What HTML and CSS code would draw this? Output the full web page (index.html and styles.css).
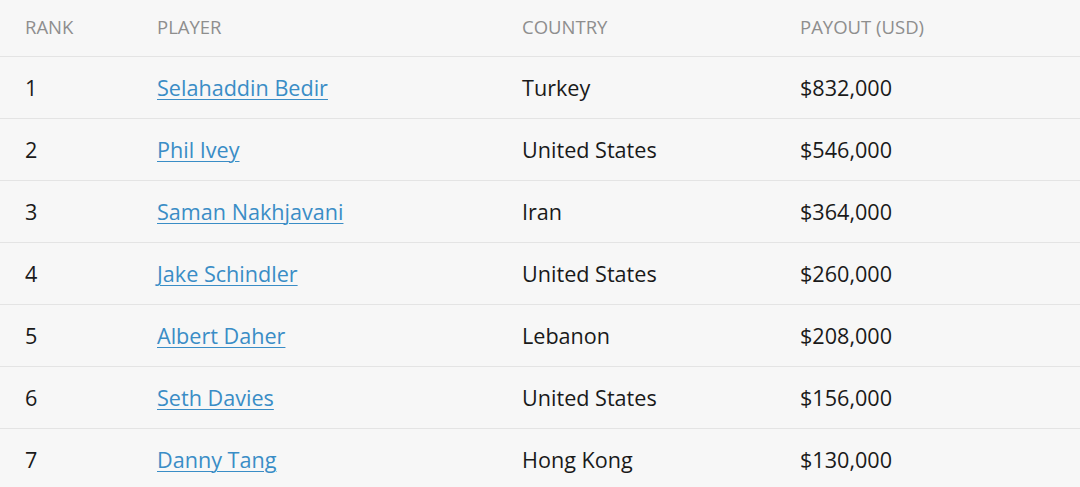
FILE: index.html
```html
<!DOCTYPE html>
<html>
<head>
<meta charset="utf-8">
<link rel="stylesheet" href="styles.css">
</head>
<body>
<div class="table">
  <div class="row head">
    <div class="c rank">RANK</div>
    <div class="c">PLAYER</div>
    <div class="c">COUNTRY</div>
    <div class="c">PAYOUT (USD)</div>
  </div>
  <div class="row">
    <div class="c rank">1</div>
    <div class="c"><a href="#">Selahaddin Bedir</a></div>
    <div class="c">Turkey</div>
    <div class="c">$832,000</div>
  </div>
  <div class="row">
    <div class="c rank">2</div>
    <div class="c"><a href="#">Phil Ivey</a></div>
    <div class="c">United States</div>
    <div class="c">$546,000</div>
  </div>
  <div class="row">
    <div class="c rank">3</div>
    <div class="c"><a href="#">Saman Nakhjavani</a></div>
    <div class="c">Iran</div>
    <div class="c">$364,000</div>
  </div>
  <div class="row">
    <div class="c rank">4</div>
    <div class="c"><a href="#">Jake Schindler</a></div>
    <div class="c">United States</div>
    <div class="c">$260,000</div>
  </div>
  <div class="row">
    <div class="c rank">5</div>
    <div class="c"><a href="#">Albert Daher</a></div>
    <div class="c">Lebanon</div>
    <div class="c">$208,000</div>
  </div>
  <div class="row">
    <div class="c rank">6</div>
    <div class="c"><a href="#">Seth Davies</a></div>
    <div class="c">United States</div>
    <div class="c">$156,000</div>
  </div>
  <div class="row">
    <div class="c rank">7</div>
    <div class="c"><a href="#">Danny Tang</a></div>
    <div class="c">Hong Kong</div>
    <div class="c">$130,000</div>
  </div>
</div>
</body>
</html>
```
FILE: styles.css
```css
html, body {
  margin: 0;
  padding: 0;
  background: #f7f7f7;
}
body {
  font-family: "Open Sans", "Liberation Sans", sans-serif;
  color: #1a1a1a;
  overflow: hidden;
}
.table {
  display: flex;
  flex-direction: column;
}
.row {
  display: grid;
  grid-template-columns: 157px 365px 278px 1fr;
  align-items: center;
  height: 61px;
  border-bottom: 1px solid #e4e4e4;
  font-size: 21.6px;
}
.row.head {
  height: 53px;
  padding-bottom: 3px;
  font-size: 18.5px;
  color: #8e8e8e;
}
.c.rank {
  padding-left: 25px;
}
a {
  color: #3a8dc6;
  text-decoration: underline;
  text-underline-offset: 3px;
  text-decoration-thickness: 1px;
}
```
